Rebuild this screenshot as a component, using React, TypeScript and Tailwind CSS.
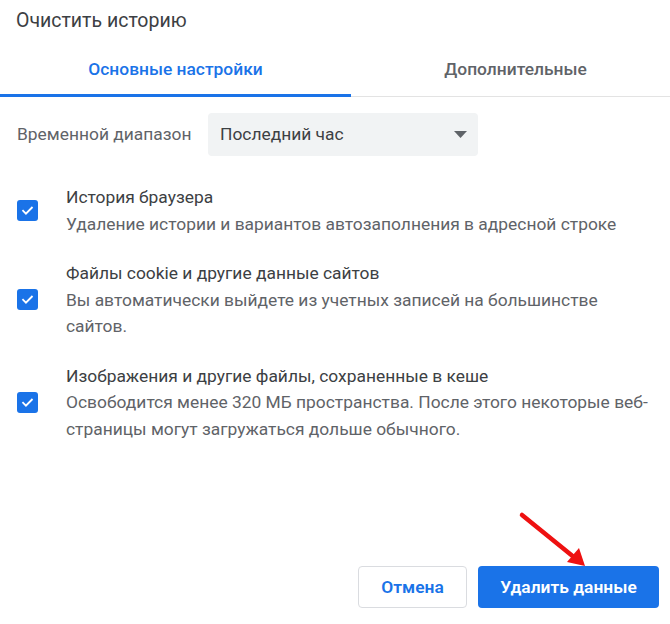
import React from "react";

const font = { fontFamily: "Roboto, 'Noto Sans', sans-serif" };

function Check() {
  return (
    <div className="w-[21px] h-[21px] rounded-[3px] bg-[#1a73e8] flex items-center justify-center shrink-0">
      <svg width="15" height="15" viewBox="0 0 24 24" fill="none">
        <path d="M5 12.5l4.5 4.5L19 7.5" stroke="white" strokeWidth="3" strokeLinecap="square" />
      </svg>
    </div>
  );
}

function Item({ title, lines }: { title: string; lines: string[] }) {
  return (
    <div className="flex items-center">
      <div className="w-[66px] pl-[17px] flex items-center shrink-0">
        <Check />
      </div>
      <div className="text-[17.4px] leading-[26.5px] whitespace-nowrap">
        <div className="text-[#3c4043]">{title}</div>
        {lines.map((l, i) => (
          <div key={i} className="text-[#5f6368]">{l}</div>
        ))}
      </div>
    </div>
  );
}

export default function App() {
  return (
    <div className="relative w-[670px] h-[624px] bg-white overflow-hidden" style={font}>
      <div className="pt-[7px] pl-[16px] text-[19.5px] leading-[28px] text-[#3c4043]">Очистить историю</div>
      <div className="mt-[9px] flex border-b border-[#e3e3e3]">
        <div className="w-[351px] flex flex-col items-center">
          <div className="h-[50px] flex items-center text-[17.4px] font-medium text-[#1a73e8]">Основные настройки</div>
          <div className="h-[3px] w-full bg-[#1a73e8] -mb-px" />
        </div>
        <div className="flex-1 h-[50px] pl-[10px] flex items-center justify-center text-[17.4px] font-medium text-[#5f6368]">Дополнительные</div>
      </div>
      <div className="mt-[16px] flex items-center">
        <div className="pl-[17px] w-[208px] text-[17.4px] text-[#5f6368] whitespace-nowrap">Временной диапазон</div>
        <div className="w-[270px] h-[43px] rounded-[4px] bg-[#f1f3f4] flex items-center justify-between pl-[12px] pr-[11px] text-[17.4px] text-[#3c4043]">
          <span>Последний час</span>
          <svg width="13" height="7" viewBox="0 0 13 7"><path d="M0 0h13L6.5 7z" fill="#5f6368" /></svg>
        </div>
      </div>
      <div className="mt-[28px] flex flex-col gap-[23px]">
        <Item title="История браузера" lines={["Удаление истории и вариантов автозаполнения в адресной строке"]} />
        <Item title="Файлы cookie и другие данные сайтов" lines={["Вы автоматически выйдете из учетных записей на большинстве", "сайтов."]} />
        <Item title="Изображения и другие файлы, сохраненные в кеше" lines={["Освободится менее 320 МБ пространства. После этого некоторые веб-", "страницы могут загружаться дольше обычного."]} />
      </div>
      <div className="absolute left-0 right-0 top-[566px] flex justify-end gap-[11px] pr-[11px]">
        <button className="w-[109px] h-[42px] rounded-[4px] border border-[#dadce0] bg-white text-[17.4px] font-semibold text-[#1a73e8]">Отмена</button>
        <button className="w-[181px] h-[42px] rounded-[4px] bg-[#1a73e8] text-[17.4px] font-semibold text-white">Удалить данные</button>
      </div>
      <svg className="absolute left-[515px] top-[508px]" width="80" height="64" viewBox="0 0 80 64">
        <path d="M7 7L60 50" stroke="#ee1111" strokeWidth="4.5" strokeLinecap="round" />
        <path d="M70 58L52 54L64 40z" fill="#ee1111" />
      </svg>
    </div>
  );
}
